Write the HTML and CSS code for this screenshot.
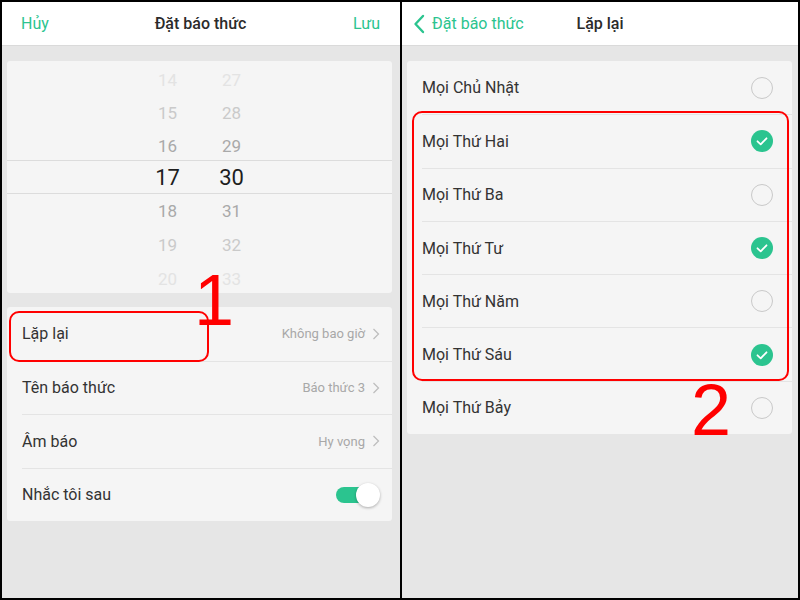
FILE: index.html
```html
<!DOCTYPE html>
<html lang="vi">
<head>
    <meta charset="UTF-8">
    <title>Đặt báo thức</title>
    <link rel="stylesheet" href="styles.css">
</head>
<body>
<div class="screen">
    <!-- màn hình 1: đặt báo thức -->
    <section class="panel">
        <header class="bar">
            <a class="bar-btn">Hủy</a>
            <h1 class="bar-title">Đặt báo thức</h1>
            <a class="bar-btn bar-btn-end">Lưu</a>
        </header>

        <div class="card wheel">
            <div class="wheel-row fade-3"><span>14</span><span>27</span></div>
            <div class="wheel-row fade-2"><span>15</span><span>28</span></div>
            <div class="wheel-row fade-1"><span>16</span><span>29</span></div>
            <div class="wheel-row is-on"><span>17</span><span>30</span></div>
            <div class="wheel-row fade-1"><span>18</span><span>31</span></div>
            <div class="wheel-row fade-2"><span>19</span><span>32</span></div>
            <div class="wheel-row fade-3"><span>20</span><span>33</span></div>
        </div>

        <ul class="card list">
            <li class="row">
                <span class="row-label">Lặp lại</span>
                <span class="row-value">Không bao giờ</span>
                <svg class="chev" width="8" height="12" viewBox="0 0 8 12"><polyline points="1.5,1 6.5,6 1.5,11"/></svg>
            </li>
            <li class="row">
                <span class="row-label">Tên báo thức</span>
                <span class="row-value">Báo thức 3</span>
                <svg class="chev" width="8" height="12" viewBox="0 0 8 12"><polyline points="1.5,1 6.5,6 1.5,11"/></svg>
            </li>
            <li class="row">
                <span class="row-label">Âm báo</span>
                <span class="row-value">Hy vọng</span>
                <svg class="chev" width="8" height="12" viewBox="0 0 8 12"><polyline points="1.5,1 6.5,6 1.5,11"/></svg>
            </li>
            <li class="row">
                <span class="row-label">Nhắc tôi sau</span>
                <span class="switch"><span class="switch-knob"></span></span>
            </li>
        </ul>

        <div class="mark-box mark-box-1"></div>
        <span class="mark-num mark-num-1">1</span>
    </section>

    <!-- màn hình 2: lặp lại -->
    <section class="panel panel-right">
        <header class="bar">
            <a class="bar-back">
                <svg width="12" height="20" viewBox="0 0 12 20"><polyline points="10,2 2.5,10 10,18"/></svg>
                Đặt báo thức
            </a>
            <h1 class="bar-title">Lặp lại</h1>
            <span></span>
        </header>

        <ul class="card list days">
            <li class="row"><span class="row-label">Mọi Chủ Nhật</span><span class="tick"></span></li>
            <li class="row"><span class="row-label">Mọi Thứ Hai</span><span class="tick on"><svg width="22" height="22" viewBox="0 0 22 22"><polyline points="6.5,11.3 9.7,14.3 15.5,8.3"/></svg></span></li>
            <li class="row"><span class="row-label">Mọi Thứ Ba</span><span class="tick"></span></li>
            <li class="row"><span class="row-label">Mọi Thứ Tư</span><span class="tick on"><svg width="22" height="22" viewBox="0 0 22 22"><polyline points="6.5,11.3 9.7,14.3 15.5,8.3"/></svg></span></li>
            <li class="row"><span class="row-label">Mọi Thứ Năm</span><span class="tick"></span></li>
            <li class="row"><span class="row-label">Mọi Thứ Sáu</span><span class="tick on"><svg width="22" height="22" viewBox="0 0 22 22"><polyline points="6.5,11.3 9.7,14.3 15.5,8.3"/></svg></span></li>
            <li class="row"><span class="row-label">Mọi Thứ Bảy</span><span class="tick"></span></li>
        </ul>

        <div class="mark-box mark-box-2"></div>
        <span class="mark-num mark-num-2">2</span>
    </section>
</div>
</body>
</html>
```

FILE: styles.css
```css
*{margin:0; padding:0; box-sizing:border-box;}
body{
    font-family: Roboto, "Noto Sans", sans-serif;
    color:#333;
}
ul{list-style:none;}

.screen{
    width:800px;
    height:600px;
    border:2px solid #000;
    display:flex;
    background:#e6e6e6;
}
.panel{
    position:relative;
    flex:0 0 398px;
}
.panel-right{
    flex:1;
    border-left:2px solid #000;
}

/* thanh tiêu đề */
.bar{
    height:44px;
    background:#fff;
    border-bottom:1px solid #dadada;
    display:grid;
    grid-template-columns:1fr auto 1fr;
    align-items:center;
    padding:0 20px 0 19px;
    font-size:16px;
}
.bar-btn{
    color:#2bc48f;
    justify-self:start;
}
.bar-btn-end{justify-self:end;}
.bar-title{
    font-size:16px;
    font-weight:500;
    color:#2b2b2b;
}
.panel-right .bar{padding:0 11px;}
.bar-back{
    display:flex;
    align-items:center;
    gap:7px;
    color:#2bc48f;
    justify-self:start;
}
.bar-back svg{
    fill:none;
    stroke:#2bc48f;
    stroke-width:2.4;
    stroke-linecap:round;
    stroke-linejoin:round;
}

.card{
    width:385px;
    margin:15px 0 0 5px;
    background:#f5f5f5;
    border-radius:3px;
}

/* bánh xe chọn giờ */
.wheel{
    height:232px;
    padding-top:2px;
    overflow:hidden;
}
.wheel-row{
    height:33px;
    display:flex;
    justify-content:center;
    align-items:center;
    font-size:17px;
}
.wheel-row span{
    width:64px;
    text-align:center;
}
.wheel-row.is-on{
    height:34px;
    margin-top:-2px;
    border-top:1px solid #dcdcdc;
    border-bottom:1px solid #dcdcdc;
    font-size:22px;
    color:#1e1e1e;
}
.is-on ~ .wheel-row{height:34px;}
.fade-1{color:#a9a9a9;}
.fade-2{color:#cacaca;}
.fade-3{color:#e3e3e3;}

/* danh sách cài đặt */
.list{margin-top:14px;}
.row{
    height:53.5px;
    margin-left:15px;
    padding-right:12px;
    display:flex;
    align-items:center;
    font-size:16px;
}
.row + .row{border-top:1px solid #e4e4e4;}
.row-label{
    flex:1;
    color:#333;
}
.row-value{
    font-size:13px;
    color:#a8a8a8;
    margin-right:7px;
}
.chev{
    fill:none;
    stroke:#bcbcbc;
    stroke-width:1.2;
}

.switch{
    position:relative;
    width:36px;
    height:16px;
    border-radius:8px;
    background:#2bc48f;
    margin-right:8px;
}
.switch-knob{
    position:absolute;
    right:-8px;
    top:-4px;
    width:24px;
    height:24px;
    border-radius:50%;
    background:#fff;
    box-shadow:0 1px 3px rgba(0,0,0,0.3);
}

/* ngày trong tuần */
.days{margin-top:15px;}
.days .row{
    height:53.3px;
    padding-right:19px;
}
.tick{
    width:22px;
    height:22px;
    border-radius:50%;
    border:1.5px solid #c9c9c9;
}
.tick.on{
    border:none;
    background:#2bc48f;
}
.tick svg{
    display:block;
    fill:none;
    stroke:#fff;
    stroke-width:1.8;
    stroke-linecap:round;
    stroke-linejoin:round;
}

/* chú thích màu đỏ */
.mark-box{
    position:absolute;
    border:2px solid #f00;
    border-radius:10px;
}
.mark-box-1{left:7px; top:309px; width:200px; height:51px;}
.mark-box-2{left:10px; top:109px; width:377px; height:270px;}
.mark-num{
    position:absolute;
    font-family:"Liberation Sans", Arial, sans-serif;
    font-size:72px;
    line-height:1;
    color:#f00;
}
.mark-num-1{left:192px; top:262px;}
.mark-num-2{left:289px; top:372px;}
```
